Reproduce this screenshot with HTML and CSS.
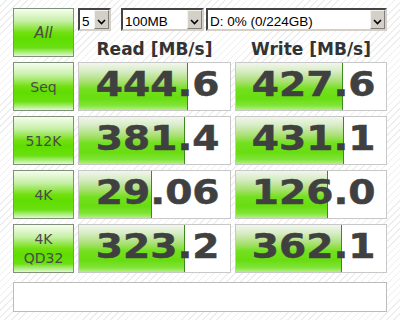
FILE: index.html
```html
<!DOCTYPE html>
<html lang="en">
<head>
  <meta charset="UTF-8" />
  <title>CrystalDiskMark</title>
  <link rel="stylesheet" href="styles.css">
</head>
<body>

  <div class="bench">
    <!-- Top row: run all + settings -->
    <div class="btn btn-all">All</div>
    <div class="toolbar">
      <div class="selects">
        <div class="select sel-count"><span>5</span><i class="arrow"><svg width="9" height="6" viewBox="0 0 9 6"><polyline points="1,1 4.5,4.5 8,1" fill="none" stroke="#000" stroke-width="1.6"/></svg></i></div>
        <div class="select sel-size"><span>100MB</span><i class="arrow"><svg width="9" height="6" viewBox="0 0 9 6"><polyline points="1,1 4.5,4.5 8,1" fill="none" stroke="#000" stroke-width="1.6"/></svg></i></div>
        <div class="select sel-drive"><span>D: 0% (0/224GB)</span><i class="arrow"><svg width="9" height="6" viewBox="0 0 9 6"><polyline points="1,1 4.5,4.5 8,1" fill="none" stroke="#000" stroke-width="1.6"/></svg></i></div>
      </div>
      <div class="heads">
        <div>Read [MB/s]</div>
        <div>Write [MB/s]</div>
      </div>
    </div>

    <!-- Results -->
    <div class="btn">Seq</div>
    <div class="cell"><div class="bar" style="width: 72%"></div><span class="val">444.6</span></div>
    <div class="cell"><div class="bar" style="width: 71%"></div><span class="val">427.6</span></div>

    <div class="btn">512K</div>
    <div class="cell"><div class="bar" style="width: 70%"></div><span class="val">381.4</span></div>
    <div class="cell"><div class="bar" style="width: 72%"></div><span class="val">431.1</span></div>

    <div class="btn">4K</div>
    <div class="cell"><div class="bar" style="width: 48.5%"></div><span class="val">29.06</span></div>
    <div class="cell"><div class="bar" style="width: 61.5%"></div><span class="val">126.0</span></div>

    <div class="btn btn-two">4K<br>QD32</div>
    <div class="cell"><div class="bar" style="width: 70%"></div><span class="val">323.2</span></div>
    <div class="cell"><div class="bar" style="width: 70.5%"></div><span class="val">362.1</span></div>
  </div>

  <div class="status"></div>

</body>
</html>
```

FILE: styles.css
```css
* {
  margin: 0;
  padding: 0;
  box-sizing: border-box;
}

body {
  width: 400px;
  height: 320px;
  overflow: hidden;
  font-family: 'DejaVu Sans', sans-serif;
  background: repeating-linear-gradient(135deg, #ffffff 0, #ffffff 4px, #eeeeee 4px, #eeeeee 5px);
  padding: 8px 0 0 13px;
}

.bench {
  display: grid;
  grid-template-columns: 61px 153px 152px;
  grid-auto-rows: 49px;
  column-gap: 4px;
  row-gap: 5px;
}

.btn {
  display: flex;
  align-items: center;
  justify-content: center;
  text-align: center;
  border: 1px solid #80907a;
  background: linear-gradient(to bottom, #f6fdf0 0%, #c8f0a8 25%, #72e010 50%, #5fdd00 62%, #6ae010 82%, #b8f090 94%, #e0fad0 100%);
  color: #4a4a4a;
  font-size: 14px;
  line-height: 18px;
}

.btn-all {
  font-style: italic;
  font-size: 15px;
}

.btn-two {
  line-height: 19px;
  padding-top: 1px;
}

.toolbar {
  grid-column: 2 / 4;
  display: flex;
  flex-direction: column;
}

.selects {
  display: flex;
  height: 23px;
}

.select {
  display: flex;
  align-items: center;
  justify-content: space-between;
  background: #fff;
  border-top: 2px solid #444;
  border-left: 2px solid #444;
  border-right: 2px solid #d4d0c8;
  border-bottom: 2px solid #d4d0c8;
  font-family: 'Liberation Sans', sans-serif;
  font-size: 13.5px;
  color: #000;
  padding-left: 2px;
}

.select span {
  padding-top: 3px;
}

.sel-count {
  width: 33px;
}

.sel-size {
  width: 83px;
  margin-left: 10px;
}

.sel-drive {
  width: 181px;
  margin-left: 2px;
}

.arrow {
  width: 15px;
  height: 19px;
  display: flex;
  align-items: center;
  justify-content: center;
  padding-top: 4px;
  background: #d4d0c8;
  border-top: 1px solid #f4f2ee;
  border-left: 1px solid #f4f2ee;
  border-right: 1px solid #808080;
  border-bottom: 1px solid #808080;
}

.heads {
  display: grid;
  grid-template-columns: 153px 152px;
  column-gap: 4px;
  margin-top: 9px;
  font-weight: bold;
  font-size: 17px;
  line-height: 18px;
  color: #333;
  text-align: center;
}

.cell {
  position: relative;
  display: flex;
  align-items: center;
  justify-content: flex-end;
  background: #fff;
  border: 1px solid #c8c8c8;
  padding: 0 10px 5px 0;
  overflow: hidden;
}

.bar {
  position: absolute;
  left: 0;
  top: 0;
  bottom: 0;
  border-right: 1px solid #3d8a20;
  background: linear-gradient(to bottom, #f2f6ee 0%, #d6ecc4 18%, #a8e070 40%, #74e020 55%, #68dd10 75%, #80e438 90%, #b4f080 100%);
}

.val {
  position: relative;
  display: inline-block;
  font-weight: bold;
  font-size: 34px;
  line-height: 36px;
  color: #404040;
  -webkit-text-stroke: 0.5px #404040;
  transform: scaleX(1.15);
  transform-origin: right center;
}

.status {
  width: 374px;
  height: 30px;
  margin-top: 9px;
  background: #fff;
  border: 1px solid #bbb;
}
```
